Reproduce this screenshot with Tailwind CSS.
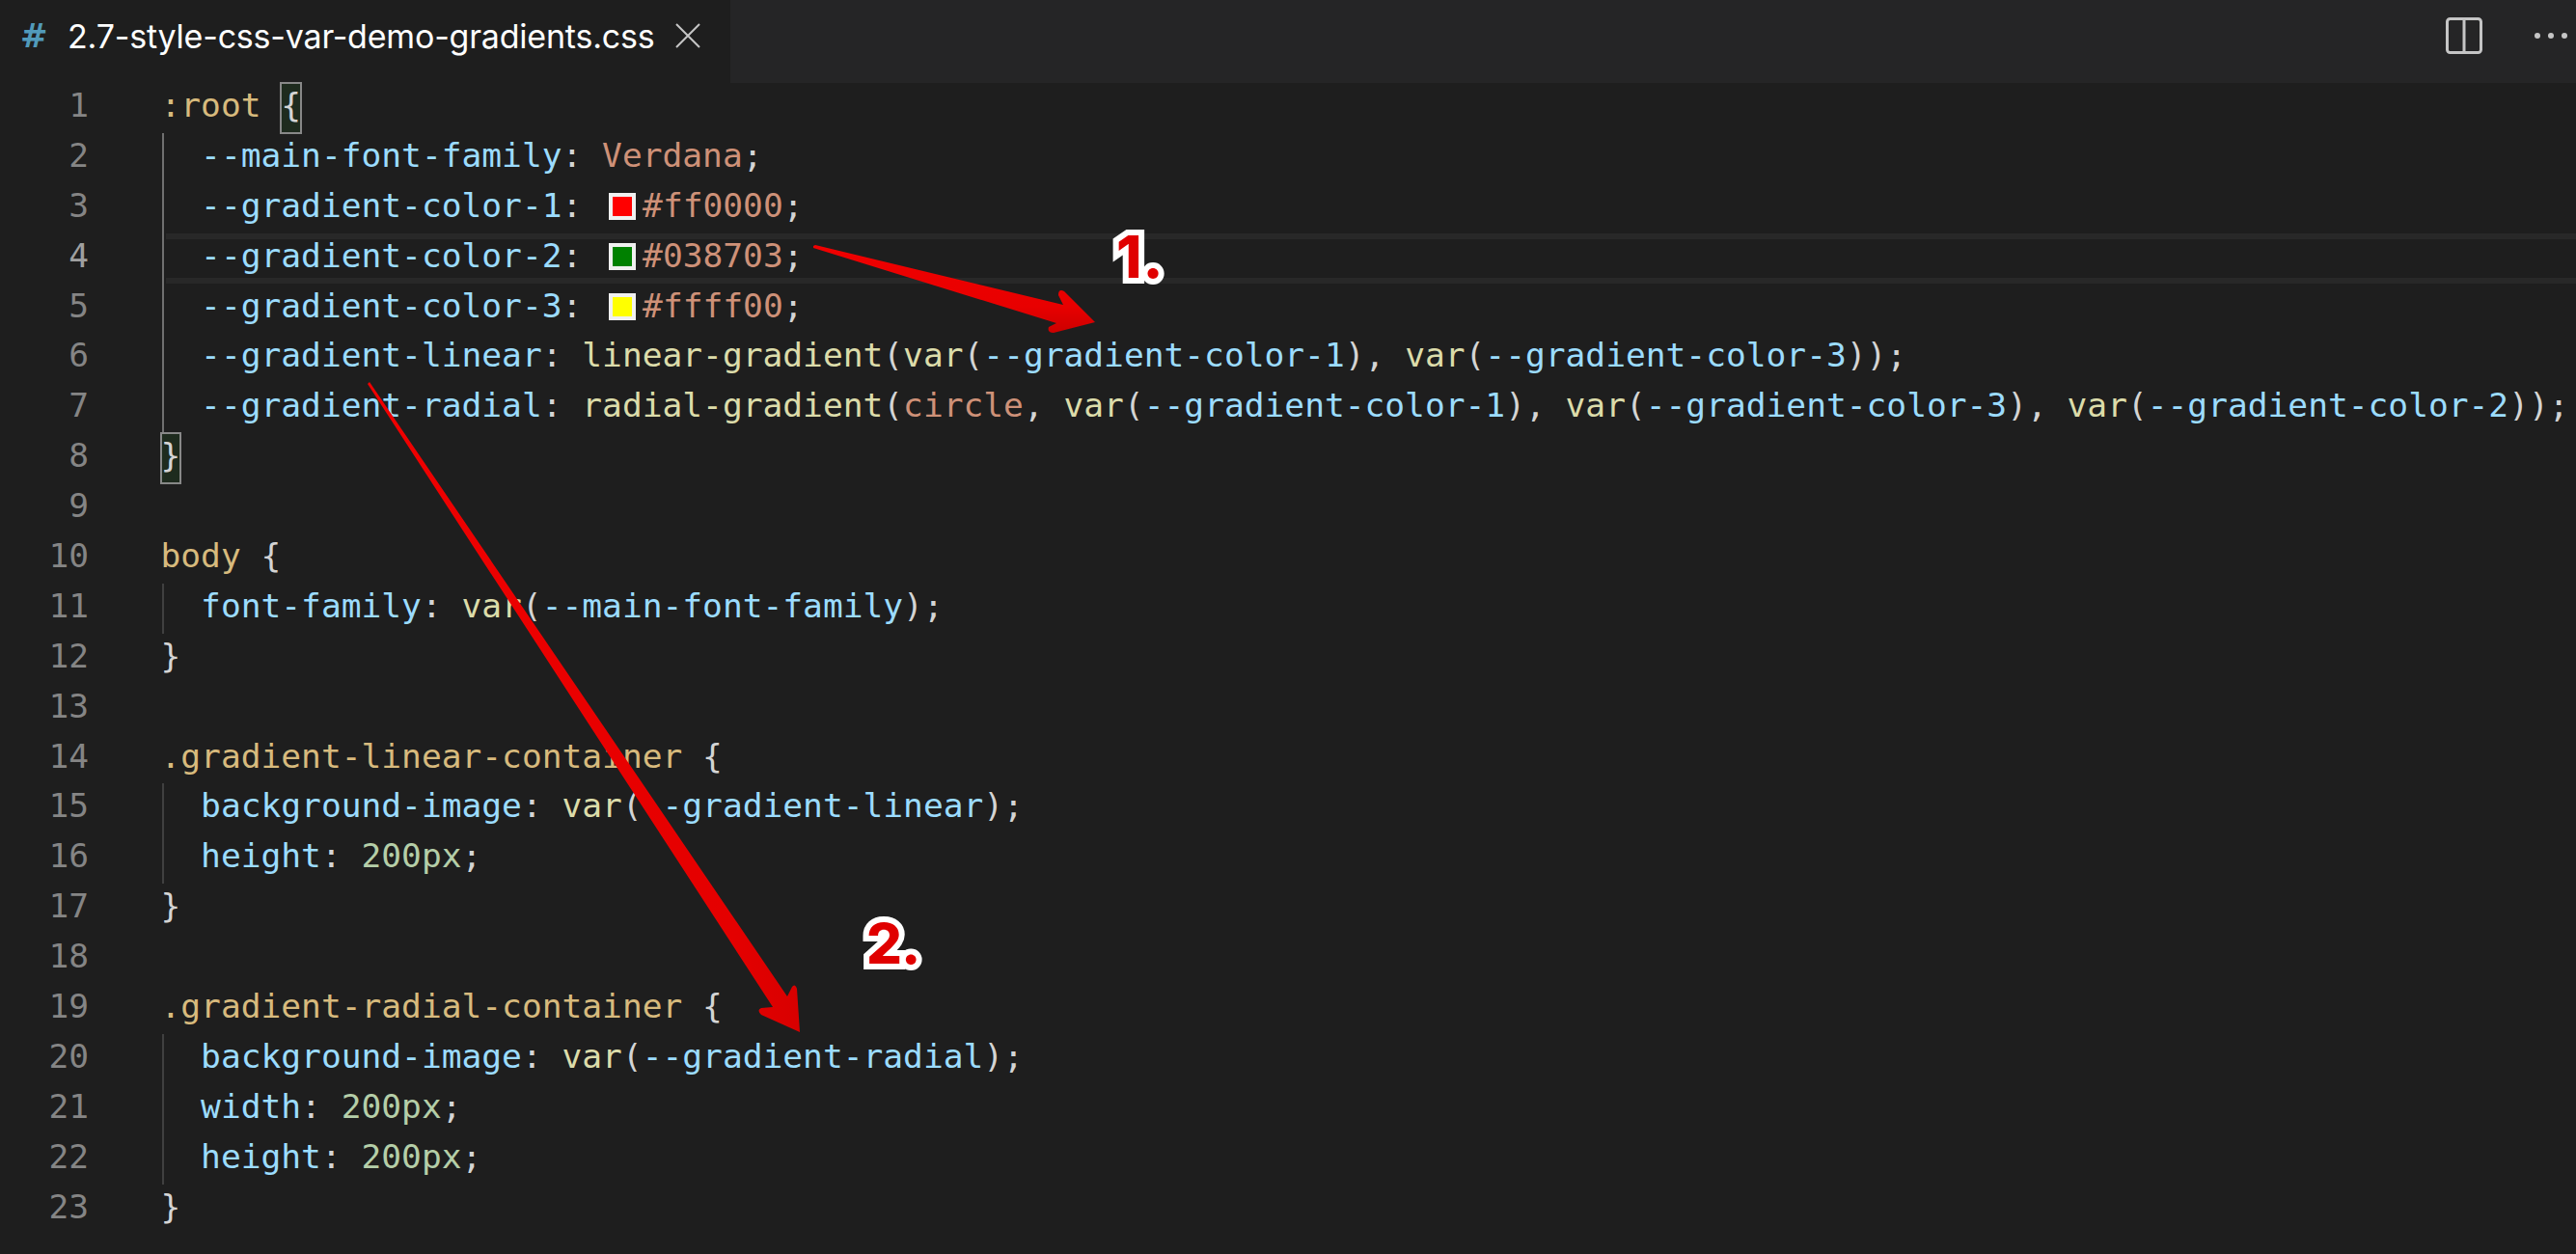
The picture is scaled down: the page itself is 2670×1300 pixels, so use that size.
<!DOCTYPE html>
<html lang="en">
<head>
    <meta charset="UTF-8">
    <title>2.7-style-css-var-demo-gradients.css</title>
    <script src="https://cdn.jsdelivr.net/npm/@tailwindcss/browser@4"></script>
</head>
<body class="bg-[#1e1e1e]">
<div class="relative w-[2670px] h-[1300px] overflow-hidden bg-[#1e1e1e]">

    <!-- tab bar -->
    <div class="flex h-[86px] bg-[#252526]">
        <div class="flex items-center w-[757px] bg-[#1e1e1e] pl-[21px] pb-[12px]">
            <span class="w-[49px] font-['DejaVu_Sans',sans-serif] font-bold text-[34px] text-[#519aba]">#</span>
            <span class="font-['Inter',sans-serif] text-[34px] tracking-[-0.2px] text-white">2.7-style-css-var-demo-gradients.css</span>
            <svg class="ml-[21px]" width="26" height="26" viewBox="0 0 26 26" fill="none" stroke="#c5c5c5" stroke-width="2"><path d="M1 1L25 25M25 1L1 25"/></svg>
        </div>
        <div class="flex-1 flex items-center justify-end pb-[13px]">
            <svg class="mr-[54px]" width="38" height="38" viewBox="0 0 38 38" fill="none" stroke="#c5c5c5" stroke-width="3"><rect x="1.5" y="1.5" width="35" height="35" rx="3"/><path d="M19 1.5V36.5"/></svg>
            <div class="flex gap-[8px] mr-[9px]">
                <span class="w-[6px] h-[6px] rounded-full bg-[#c5c5c5]"></span>
                <span class="w-[6px] h-[6px] rounded-full bg-[#c5c5c5]"></span>
                <span class="w-[6px] h-[6px] rounded-full bg-[#c5c5c5]"></span>
            </div>
        </div>
    </div>

    <!-- editor -->
    <div class="flex font-['DejaVu_Sans_Mono',monospace] text-[34.55px] leading-[47.9px] text-[#d4d4d4]">
        <div class="w-[92px] mr-[74.5px] text-right text-[#858585] *:h-[51.9px]">
            <div>1</div><div>2</div><div>3</div><div class="text-[#a0a0a0]">4</div><div>5</div><div>6</div><div>7</div><div>8</div><div>9</div><div>10</div><div>11</div><div>12</div><div>13</div><div>14</div><div>15</div><div>16</div><div>17</div><div>18</div><div>19</div><div>20</div><div>21</div><div>22</div><div>23</div>
        </div>
        <div class="flex-1 min-w-0">
            <div class="h-[51.9px] whitespace-pre"><span class="text-[#d7ba7d]">:root</span> <span class="inline-block h-[51.9px] outline-2 -outline-offset-1 outline-[#888888] bg-[#1e2b1e]">{</span></div>
            <div class="ml-[1.5px] border-l-2 border-[#707070]">
                <div class="h-[51.9px] whitespace-pre pl-[38.1px]"><span class="text-[#9cdcfe]">--main-font-family</span>: <span class="text-[#ce9178]">Verdana</span>;</div>
                <div class="h-[51.9px] whitespace-pre pl-[38.1px]"><span class="text-[#9cdcfe]">--gradient-color-1</span>: <span class="inline-block align-[-3px] w-[28px] h-[28px] ml-[7px] mr-[7px] border-4 border-[#f0f0f0] bg-[#ff0000]"></span><span class="text-[#ce9178]">#ff0000</span>;</div>
                <div class="h-[51.9px] whitespace-pre pl-[36.1px] ml-[2px] leading-[35.9px] border-y-[6px] border-[#282828]"><span class="text-[#9cdcfe]">--gradient-color-2</span>: <span class="inline-block align-[-3px] w-[28px] h-[28px] ml-[7px] mr-[7px] border-4 border-[#f0f0f0] bg-[#008000]"></span><span class="text-[#ce9178]">#038703</span>;</div>
                <div class="h-[51.9px] whitespace-pre pl-[38.1px]"><span class="text-[#9cdcfe]">--gradient-color-3</span>: <span class="inline-block align-[-3px] w-[28px] h-[28px] ml-[7px] mr-[7px] border-4 border-[#f0f0f0] bg-[#ffff00]"></span><span class="text-[#ce9178]">#ffff00</span>;</div>
                <div class="h-[51.9px] whitespace-pre pl-[38.1px]"><span class="text-[#9cdcfe]">--gradient-linear</span>: <span class="text-[#dcdcaa]">linear-gradient</span>(<span class="text-[#dcdcaa]">var</span>(<span class="text-[#9cdcfe]">--gradient-color-1</span>), <span class="text-[#dcdcaa]">var</span>(<span class="text-[#9cdcfe]">--gradient-color-3</span>));</div>
                <div class="h-[51.9px] whitespace-pre pl-[38.1px]"><span class="text-[#9cdcfe]">--gradient-radial</span>: <span class="text-[#dcdcaa]">radial-gradient</span>(<span class="text-[#ce9178]">circle</span>, <span class="text-[#dcdcaa]">var</span>(<span class="text-[#9cdcfe]">--gradient-color-1</span>), <span class="text-[#dcdcaa]">var</span>(<span class="text-[#9cdcfe]">--gradient-color-3</span>), <span class="text-[#dcdcaa]">var</span>(<span class="text-[#9cdcfe]">--gradient-color-2</span>));</div>
            </div>
            <div class="h-[51.9px] whitespace-pre"><span class="inline-block h-[51.9px] outline-2 -outline-offset-1 outline-[#888888] bg-[#1e2b1e]">}</span></div>
            <div class="h-[51.9px]"></div>

            <div class="h-[51.9px] whitespace-pre"><span class="text-[#d7ba7d]">body</span> {</div>
            <div class="ml-[1.5px] border-l-2 border-[#404040]">
                <div class="h-[51.9px] whitespace-pre pl-[38.1px]"><span class="text-[#9cdcfe]">font-family</span>: <span class="text-[#dcdcaa]">var</span>(<span class="text-[#9cdcfe]">--main-font-family</span>);</div>
            </div>
            <div class="h-[51.9px]">}</div>
            <div class="h-[51.9px]"></div>

            <div class="h-[51.9px] whitespace-pre"><span class="text-[#d7ba7d]">.gradient-linear-container</span> {</div>
            <div class="ml-[1.5px] border-l-2 border-[#404040]">
                <div class="h-[51.9px] whitespace-pre pl-[38.1px]"><span class="text-[#9cdcfe]">background-image</span>: <span class="text-[#dcdcaa]">var</span>(<span class="text-[#9cdcfe]">--gradient-linear</span>);</div>
                <div class="h-[51.9px] whitespace-pre pl-[38.1px]"><span class="text-[#9cdcfe]">height</span>: <span class="text-[#b5cea8]">200px</span>;</div>
            </div>
            <div class="h-[51.9px]">}</div>
            <div class="h-[51.9px]"></div>

            <div class="h-[51.9px] whitespace-pre"><span class="text-[#d7ba7d]">.gradient-radial-container</span> {</div>
            <div class="ml-[1.5px] border-l-2 border-[#404040]">
                <div class="h-[51.9px] whitespace-pre pl-[38.1px]"><span class="text-[#9cdcfe]">background-image</span>: <span class="text-[#dcdcaa]">var</span>(<span class="text-[#9cdcfe]">--gradient-radial</span>);</div>
                <div class="h-[51.9px] whitespace-pre pl-[38.1px]"><span class="text-[#9cdcfe]">width</span>: <span class="text-[#b5cea8]">200px</span>;</div>
                <div class="h-[51.9px] whitespace-pre pl-[38.1px]"><span class="text-[#9cdcfe]">height</span>: <span class="text-[#b5cea8]">200px</span>;</div>
            </div>
            <div class="h-[51.9px]">}</div>
        </div>
    </div>

    <!-- annotation arrows drawn over the code -->
    <svg class="absolute inset-0 pointer-events-none" width="2670" height="1300" viewBox="0 0 2670 1300">
        <defs>
            <linearGradient id="red1" x1="0" y1="0" x2="0" y2="1"><stop offset="0" stop-color="#f00000"/><stop offset="0.7" stop-color="#e80000"/><stop offset="1" stop-color="#cc0000"/></linearGradient>
            <linearGradient id="red2" x1="0" y1="0" x2="1" y2="0"><stop offset="0" stop-color="#f00000"/><stop offset="0.85" stop-color="#e40000"/><stop offset="1" stop-color="#d80000"/></linearGradient>
        </defs>
        <path fill="url(#red1)" d="M843 255 L845 254 L1102 316 L1097 306 Q1097 299 1103 302 L1135 334 L1092 345 Q1085 345 1087 339 L1095 335 L843 257 Z"/>
        <path fill="url(#red2)" d="M381 398 L383 396 L816 1033 L821 1023 Q824 1019 826 1025 L829 1070 L789 1052 Q784 1047 789 1045 L801 1044 Z"/>
    </svg>

    <!-- annotation labels -->
    <span class="absolute left-[1157px] top-[231px] font-['Inter',sans-serif] font-extrabold text-[60px] leading-[70px] tracking-[1px] text-[#e00000] [-webkit-text-stroke:12px_#ffffff] [paint-order:stroke_fill]">1.</span>
    <span class="absolute left-[898px] top-[943px] font-['Inter',sans-serif] font-extrabold text-[58px] leading-[70px] tracking-[-1px] text-[#e00000] [-webkit-text-stroke:12px_#ffffff] [paint-order:stroke_fill]">2.</span>
</div>
</body>
</html>
